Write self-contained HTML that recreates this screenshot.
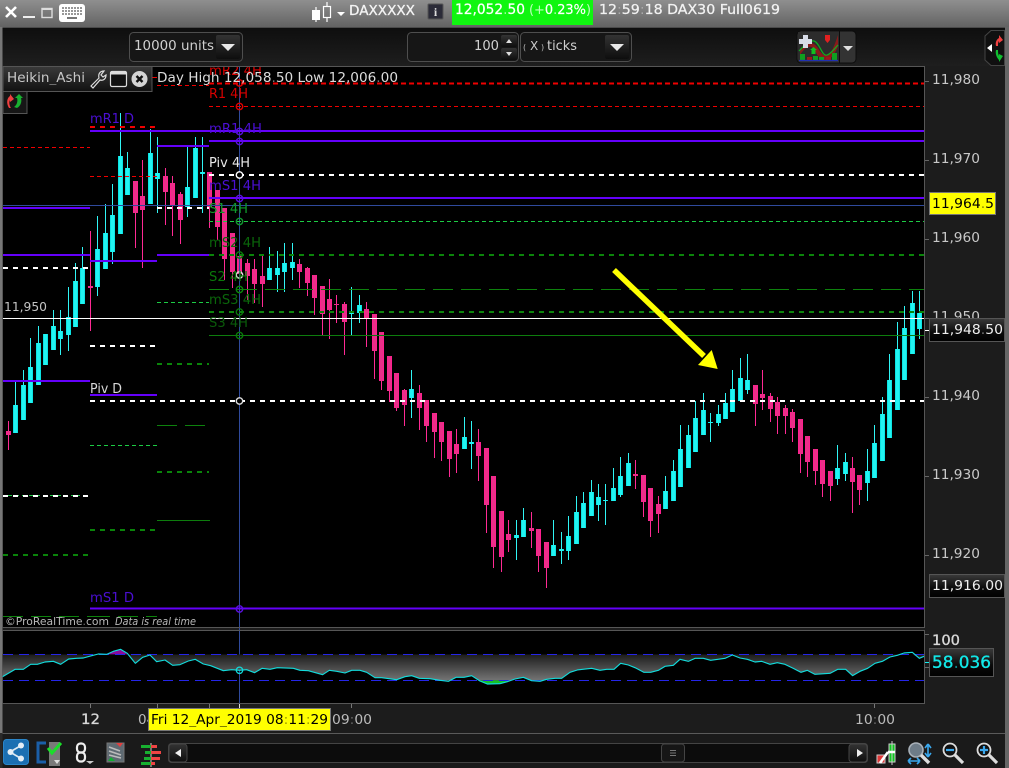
<!DOCTYPE html>
<html><head><meta charset="utf-8"><title>DAX chart</title>
<style>
html,body{margin:0;padding:0;background:#1c1c1c;width:1009px;height:768px;overflow:hidden}
svg{display:block;position:absolute;left:0;top:0}
text{font-family:"DejaVu Sans","Liberation Sans",sans-serif;white-space:pre}
</style></head><body>
<svg width="1009" height="768" viewBox="0 0 1009 768" xmlns="http://www.w3.org/2000/svg">
<defs>
<linearGradient id="top" x1="0" y1="0" x2="0" y2="1"><stop offset="0" stop-color="#8f8f8f"/><stop offset="1" stop-color="#636363"/></linearGradient>
<linearGradient id="tb" x1="0" y1="0" x2="0" y2="1"><stop offset="0" stop-color="#0e0e0e"/><stop offset="1" stop-color="#1e1e1e"/></linearGradient>
<linearGradient id="btn" x1="0" y1="0" x2="0" y2="1"><stop offset="0" stop-color="#333"/><stop offset="1" stop-color="#0e0e0e"/></linearGradient>
<linearGradient id="lab" x1="0" y1="0" x2="0" y2="1"><stop offset="0" stop-color="#3a3a3a"/><stop offset=".6" stop-color="#0a0a0a"/><stop offset="1" stop-color="#000"/></linearGradient>
<linearGradient id="osc" gradientUnits="userSpaceOnUse" x1="0" y1="163" x2="0" y2="241"><stop offset="0" stop-color="#1c1c1c"/><stop offset="1" stop-color="#747474"/></linearGradient>
<linearGradient id="hdr" x1="0" y1="0" x2="0" y2="1"><stop offset="0" stop-color="#3a3a3a"/><stop offset="1" stop-color="#111"/></linearGradient>
<clipPath id="cc"><rect x="3" y="66" width="921" height="561"/></clipPath>
<clipPath id="band"><rect x="0" y="163" width="1600" height="78"/></clipPath>
<clipPath id="ind"><rect x="798" y="32" width="41" height="29"/></clipPath>
<path id="cb" fill="none" d="M15.5 405V433M23.5 385V420M30.5 367V403M38.5 343V385M45.5 334V365M53.5 326V350M60.5 331V339M68.5 317V335M75.5 281V327M82.5 268V304M97.5 249V287M105.5 233V269M112.5 215V252M120.5 156V234M127.5 168V195M150.5 153V204M157.5 173V179M187.5 187V207M195.5 148V198M202.5 172V174M269.5 268V280M277.5 268V275M284.5 263V272M292.5 262V268M351.5 312V314M359.5 305V313M411.5 389V398M464.5 437V449M471.5 442V444M516.5 535V538M523.5 520V537M553.5 545V556M561.5 549V551M568.5 536V551M576.5 512V544M583.5 503V528M591.5 492V516M598.5 497V505M605.5 500V501M613.5 488V501M620.5 476V495M628.5 463V486M665.5 491V509M673.5 471V501M680.5 449V487M688.5 435V468M695.5 418V452M703.5 410V435M710.5 422V423M718.5 414V423M725.5 403V419M732.5 389V412M740.5 378V401M747.5 380V390M837.5 468V479M845.5 462V474M867.5 471V483M874.5 443V478M882.5 414V461M889.5 380V438M897.5 349V410M904.5 328V380M912.5 303V354M919.5 313V329"/>
<path id="pb" fill="none" d="M8.5 431V435M90.5 286V288M135.5 181V213M142.5 196V210M165.5 176V192M172.5 183V206M180.5 194V220M209.5 172V207M217.5 190V227M224.5 208V259M232.5 233V272M239.5 256V274M247.5 263V276M254.5 269V284M262.5 276V284M299.5 264V272M307.5 268V283M314.5 275V298M322.5 286V314M329.5 299V310M336.5 304V305M344.5 304V322M366.5 309V318M374.5 314V351M381.5 332V381M389.5 356V391M396.5 373V408M404.5 390V405M419.5 393V408M426.5 400V426M434.5 413V432M441.5 422V442M449.5 431V459M456.5 444V454M478.5 442V456M486.5 448V505M493.5 476V547M501.5 511V557M508.5 534V540M531.5 528V531M538.5 529V556M546.5 542V568M635.5 474V476M643.5 475V502M650.5 488V521M658.5 504V514M755.5 385V404M762.5 394V398M770.5 396V409M777.5 402V416M785.5 408V416M792.5 412V428M800.5 419V454M807.5 436V462M815.5 449V471M822.5 460V484M830.5 471V486M852.5 468V482M859.5 475V490"/>
</defs>

<!-- backgrounds -->
<rect width="1009" height="768" fill="#1c1c1c"/>
<rect x="0" y="0" width="1009" height="27" fill="url(#top)"/>
<rect x="0" y="27" width="1009" height="1" fill="#4a4a4a"/>
<rect x="2" y="28" width="1003" height="38" fill="url(#tb)"/>
<rect x="0" y="27" width="2.5" height="706" fill="#777"/>
<rect x="1005" y="27" width="4" height="741" fill="#666"/>
<rect x="2.5" y="66" width="922" height="561" fill="#000"/>
<rect x="2.5" y="630.5" width="922" height="73" fill="#000"/>
<rect x="2.5" y="733" width="1002.5" height="1" fill="#5a5a5a"/>
<rect x="2.5" y="734" width="1002.5" height="34" fill="#1a1a1a"/>
<rect x="0" y="733" width="2.5" height="35" fill="#2a2a2a"/>

<!-- candles -->
<g clip-path="url(#cc)">
<path fill="none" stroke="#30f5f5" stroke-width="1" d="M15.5 382V433M23.5 370V420M30.5 338V403M38.5 326V385M45.5 334V365M53.5 310V350M60.5 310V355M68.5 287V351M75.5 263V327M82.5 247V304M97.5 216V296M105.5 204V269M112.5 184V264M120.5 113V234M127.5 152V195M150.5 129V204M157.5 137V213M187.5 147V217M195.5 137V198M202.5 137V213M269.5 247V280M277.5 251V292M284.5 243V292M292.5 243V280M351.5 287V335M359.5 295V323M411.5 370V418M464.5 417V449M471.5 421V469M516.5 520V560M523.5 508V537M553.5 520V556M561.5 532V564M568.5 516V560M576.5 496V544M583.5 492V528M591.5 480V516M598.5 484V521M605.5 484V525M613.5 468V501M620.5 457V497M628.5 453V486M665.5 476V509M673.5 460V501M680.5 425V487M688.5 425V468M695.5 401V452M703.5 393V435M710.5 413V442M718.5 405V426M725.5 393V419M732.5 370V412M740.5 358V401M747.5 354V394M837.5 445V485M845.5 453V481M867.5 449V501M874.5 425V478M882.5 397V461M889.5 354V438M897.5 322V410M904.5 306V380M912.5 291V354M919.5 291V339"/>
<path fill="none" stroke="#ff2a94" stroke-width="1" d="M8.5 421V450M90.5 231V331M135.5 181V248M142.5 160V268M165.5 168V225M172.5 176V236M180.5 192V244M209.5 172V228M217.5 190V240M224.5 208V280M232.5 233V288M239.5 256V300M247.5 259V300M254.5 259V303M262.5 256V307M299.5 259V288M307.5 267V296M314.5 275V315M322.5 286V335M329.5 279V339M336.5 295V323M344.5 302V355M366.5 302V347M374.5 314V379M381.5 332V390M389.5 356V402M396.5 373V411M404.5 389V426M419.5 385V430M426.5 400V442M434.5 413V458M441.5 422V461M449.5 431V477M456.5 429V473M478.5 429V481M486.5 448V533M493.5 476V568M501.5 511V572M508.5 520V552M531.5 512V548M538.5 529V572M546.5 542V588M635.5 460V489M643.5 475V517M650.5 488V537M658.5 496V533M755.5 385V426M762.5 370V410M770.5 393V422M777.5 397V434M785.5 405V434M792.5 409V442M800.5 419V473M807.5 436V477M815.5 449V485M822.5 460V497M830.5 471V501M852.5 457V513M859.5 475V505"/>
<use href="#cb" stroke="#0ce4e4" stroke-width="5"/>
<use href="#cb" stroke="#22f4f2" stroke-width="3"/>
<use href="#pb" stroke="#ff1f90" stroke-width="5"/>
<use href="#pb" stroke="#ea2f88" stroke-width="3"/>
</g>

<!-- crosshair -->
<path d="M3 205.5H924M239.5 66V703" stroke="#2f4a9c" stroke-width="1" fill="none"/>

<!-- level lines -->
<g fill="none" clip-path="url(#cc)">
<!-- red -->
<g stroke="#f00000">
<path d="M209 83.5H924" stroke-width="2" stroke-dasharray="5 3"/>
<path d="M209 106.5H924" stroke-dasharray="4 3"/>
<path d="M157 85.5H209" stroke-dasharray="4 3"/>
<path d="M152 77.5H157"/>
<path d="M3 147.5H90" stroke-dasharray="4 3"/>
<path d="M90 127H156" stroke-width="2" stroke-dasharray="5 5"/>
<path d="M90 176.5H157" stroke-dasharray="4 3"/>
</g>
<!-- purple -->
<g stroke="#6400fa" stroke-width="2">
<path d="M90 131H924M209 141H924M157 146H209M209 198H924M3 208H90M3 255H90M157 255H209M90 261H157M3 381H90M90 395H157M90 608.5H924"/>
</g>
<path d="M3 318.5H924" stroke="#fff"/>
<!-- green -->
<g stroke="#1ccc44" stroke-dasharray="4 3">
<path d="M209 221.5H924M157 302.5H209M90 445.5H157M8 495.5H80"/>
</g>
<g stroke="#0a840a" stroke-width="2" stroke-dasharray="5 5">
<path d="M209 255H924M209 312H924M157 364H209M157 472H209M90 530H157M3 555H90"/>
</g>
<g stroke="#0d820d" stroke-dasharray="20 8">
<path d="M209 289.5H924M157 425.5H209M3 616.5H90M90 616.5H157"/>
</g>
<path d="M209 335.5H924M157 520.5H210" stroke="#0d7d0d"/>
<!-- white -->
<g stroke="#fff" stroke-width="2" stroke-dasharray="5 5">
<path d="M209 175H924M157 208H209M3 268H90M90 346H157M90 401H924M3 496H90"/>
</g>
</g>

<!-- crosshair circles -->
<g fill="none" stroke-width="1.4">
<circle cx="239.5" cy="83" r="3.2" stroke="#e00000"/>
<circle cx="239.5" cy="106.5" r="3.2" stroke="#e00000"/>
<circle cx="239.5" cy="131.5" r="3.2" stroke="#5a10e0"/>
<circle cx="239.5" cy="141.5" r="3.2" stroke="#5a10e0"/>
<circle cx="239.5" cy="175" r="3.2" stroke="#fff" fill="#000"/>
<circle cx="239.5" cy="198.5" r="3.2" stroke="#5a10e0"/>
<circle cx="239.5" cy="221.5" r="3.2" stroke="#109a30"/>
<circle cx="239.5" cy="255" r="3.2" stroke="#0a7a0a"/>
<circle cx="239.5" cy="275" r="3.2" stroke="#ddd"/>
<circle cx="239.5" cy="289.5" r="3.2" stroke="#0a8a0a"/>
<circle cx="239.5" cy="312" r="3.2" stroke="#0a7a0a"/>
<circle cx="239.5" cy="335.5" r="3.2" stroke="#0a7a0a"/>
<circle cx="239.5" cy="401" r="3.2" stroke="#ddd" fill="#000"/>
<circle cx="239.5" cy="609" r="3.2" stroke="#5a10e0"/>
</g>

<!-- level labels -->
<g font-size="13">
<g clip-path="url(#cc)"><text x="209" y="75" fill="#d80000" textLength="53" lengthAdjust="spacingAndGlyphs">mR2 4H</text></g>
<text x="209" y="98" fill="#d80000" textLength="39" lengthAdjust="spacingAndGlyphs">R1 4H</text>
<text x="209" y="133" fill="#4b0fd4" textLength="53" lengthAdjust="spacingAndGlyphs">mR1 4H</text>
<text x="209" y="167" fill="#e8e8e8" textLength="41" lengthAdjust="spacingAndGlyphs">Piv 4H</text>
<text x="209" y="190" fill="#4b0fd4" textLength="52" lengthAdjust="spacingAndGlyphs">mS1 4H</text>
<text x="209" y="213" fill="#0f9a2a" textLength="39" lengthAdjust="spacingAndGlyphs">S1 4H</text>
<text x="209" y="247" fill="#0a660a" textLength="52" lengthAdjust="spacingAndGlyphs">mS2 4H</text>
<text x="209" y="281" fill="#0a780a" textLength="39" lengthAdjust="spacingAndGlyphs">S2 4H</text>
<text x="209" y="304" fill="#0a660a" textLength="52" lengthAdjust="spacingAndGlyphs">mS3 4H</text>
<text x="209" y="327" fill="#0a5a0a" textLength="39" lengthAdjust="spacingAndGlyphs">S3 4H</text>
<text x="90" y="123" fill="#4b0fd4" textLength="44" lengthAdjust="spacingAndGlyphs">mR1 D</text>
<text x="90" y="393" fill="#d8d8d8" textLength="32" lengthAdjust="spacingAndGlyphs">Piv D</text>
<text x="90" y="602" fill="#4b0fd4" textLength="44" lengthAdjust="spacingAndGlyphs">mS1 D</text>
<text x="4" y="311" fill="#c4c4c4" font-size="12.5" textLength="43" lengthAdjust="spacingAndGlyphs">11,950</text>
<text x="157" y="82" fill="#dcdcdc" textLength="241" lengthAdjust="spacingAndGlyphs">Day High 12,058<tspan fill="#777">.</tspan>50 Low 12,006<tspan fill="#777">.</tspan>00</text>
</g>

<!-- yellow arrow -->
<path d="M614 270L704 356" stroke="#ffff00" stroke-width="5.5" fill="none"/>
<path d="M698 365L711.7 350L717.7 369Z" fill="#ffff00"/>

<!-- chart frame -->
<rect x="2.5" y="66.5" width="922" height="561" fill="none" stroke="#565656"/>
<rect x="2.5" y="630.5" width="922" height="73" fill="none" stroke="#565656"/>

<!-- footer text -->
<text x="5" y="625" fill="#b8b8b8" font-size="11" textLength="104" lengthAdjust="spacingAndGlyphs">©ProRealTime<tspan fill="#777">.</tspan>com</text>
<text x="115" y="625" fill="#b8b8b8" font-size="11" font-style="italic" textLength="81" lengthAdjust="spacingAndGlyphs">Data is real time</text>

<!-- oscillator -->
<g transform="translate(0 600) scale(.33333)">
<g clip-path="url(#band)"><polygon fill="url(#osc)" points="8,163 8,230 45,208 70,208 92,193 112,193 135,186 160,184 182,193 206,177 230,175 250,174 275,167 295,162 320,163 340,154 362,148 382,160 406,190 428,172 450,165 470,185 495,180 518,196 540,194 565,183 586,178 610,192 632,197 670,212 695,209 718,211 740,209 764,218 786,205 810,208 832,203 880,205 900,211 925,212 968,224 988,211 1010,214 1035,219 1055,211 1080,211 1100,217 1125,233 1145,233 1190,239 1215,230 1235,227 1258,235 1290,236 1320,241 1345,244 1368,232 1392,232 1415,227 1440,243 1462,252 1500,251 1500,163"/></g>
<polygon fill="#8a0a9a" points="320,163 340,154 362,148 382,163"/>
<polygon fill="#15c02a" points="1436,241 1462,252 1500,251 1522,245 1530,241"/>
</g>
<g transform="translate(500 600) scale(.33333)">
<g clip-path="url(#band)"><polygon fill="url(#osc)" points="0,163 0,251 22,245 45,237 70,232 95,242 120,244 140,238 165,235 185,235 210,217 232,210 275,205 300,211 320,208 342,208 362,190 385,195 405,203 432,217 452,217 475,211 495,199 520,196 540,178 565,184 585,175 610,175 632,181 675,175 697,165 720,174 742,178 765,186 785,184 810,193 832,188 855,193 880,205 903,217 922,211 945,223 990,220 1013,208 1037,208 1058,227 1080,214 1103,205 1125,190 1147,184 1170,171 1192,166 1212,163 1237,163 1258,175 1272,169 1272,163"/></g>
</g>
<path d="M3 654.5H924M3 680.5H924" stroke="#2525e8" fill="none" stroke-dasharray="10 6"/>
<g transform="translate(0 600) scale(.33333)" fill="none" stroke="#12dcdc" stroke-width="3.4" stroke-linejoin="round">
<polyline points="8,230 45,208 70,208 92,193 112,193 135,186 160,184 182,193 206,177 230,175 250,174 275,167 295,162 320,163 340,154 362,148 382,160 406,190 428,172 450,165 470,185 495,180 518,196 540,194 565,183 586,178 610,192 632,197 670,212 695,209 718,211 740,209 764,218 786,205 810,208 832,203 880,205 900,211 925,212 968,224 988,211 1010,214 1035,219 1055,211 1080,211 1100,217 1125,233 1145,233 1190,239 1215,230 1235,227 1258,235 1290,236 1320,241 1345,244 1368,232 1392,232 1415,227 1440,243 1462,252 1500,251"/>
</g>
<g transform="translate(500 600) scale(.33333)" fill="none" stroke="#12dcdc" stroke-width="3.4" stroke-linejoin="round">
<polyline points="0,251 22,245 45,237 70,232 95,242 120,244 140,238 165,235 185,235 210,217 232,210 275,205 300,211 320,208 342,208 362,190 385,195 405,203 432,217 452,217 475,211 495,199 520,196 540,178 565,184 585,175 610,175 632,181 675,175 697,165 720,174 742,178 765,186 785,184 810,193 832,188 855,193 880,205 903,217 922,211 945,223 990,220 1013,208 1037,208 1058,227 1080,214 1103,205 1125,190 1147,184 1170,171 1192,166 1212,159 1237,157 1258,175 1272,169"/>
</g>
<circle cx="239.5" cy="670.3" r="3.2" fill="none" stroke="#12dcdc" stroke-width="1.3"/>

<!-- price axis -->
<path d="M925 81.5H929M925 160.5H929M925 239.5H929M925 318.5H929M925 397.5H929M925 476.5H929M925 555.5H929M925 634.5H929M925 667.5H929" stroke="#666" fill="none"/>
<path d="M925 330.5H929" stroke="#fff"/>
<path d="M925 662.5H929" stroke="#1ee"/>
<g font-size="13.5" fill="#c8c8c8">
<text x="932" y="84" textLength="48" lengthAdjust="spacingAndGlyphs">11,980</text>
<text x="932" y="163" textLength="48" lengthAdjust="spacingAndGlyphs">11,970</text>
<text x="932" y="242" textLength="48" lengthAdjust="spacingAndGlyphs">11,960</text>
<text x="932" y="321" textLength="48" lengthAdjust="spacingAndGlyphs">11,950</text>
<text x="932" y="400" textLength="48" lengthAdjust="spacingAndGlyphs">11,940</text>
<text x="932" y="479" textLength="48" lengthAdjust="spacingAndGlyphs">11,930</text>
<text x="932" y="558" textLength="48" lengthAdjust="spacingAndGlyphs">11,920</text>
<text x="932" y="645" textLength="28" lengthAdjust="spacingAndGlyphs" font-size="14.5" fill="#d8d8d8" stroke="#d8d8d8" stroke-width=".35">100</text>
</g>
<rect x="929.5" y="192.5" width="66" height="22" fill="#ffff00" stroke="#777"/>
<text x="932" y="208" font-size="13.5" fill="#000" textLength="62" lengthAdjust="spacingAndGlyphs">11,964<tspan fill="#888800">.</tspan>5</text>
<rect x="929.5" y="318.5" width="75" height="23" fill="url(#lab)" stroke="#555"/>
<text x="932" y="334" font-size="13.5" fill="#eee" textLength="71" lengthAdjust="spacingAndGlyphs">11,948<tspan fill="#777">.</tspan>50</text>
<rect x="929.5" y="574.5" width="75" height="23" fill="url(#lab)" stroke="#555"/>
<text x="932" y="590" font-size="13.5" fill="#eee" textLength="71" lengthAdjust="spacingAndGlyphs">11,916<tspan fill="#777">.</tspan>00</text>
<rect x="929.5" y="648.5" width="64" height="28" fill="url(#lab)" stroke="#555"/>
<text x="932" y="668" font-size="16.5" fill="#12e8e8" stroke="#12e8e8" stroke-width=".35" textLength="59" lengthAdjust="spacingAndGlyphs">58<tspan fill="#0a8888" stroke="none">.</tspan>036</text>

<!-- time axis -->
<path d="M90.5 704V708M157.5 704V708M209.5 704V708M351.5 704V708M874.5 704V708" stroke="#777" fill="none"/>
<path d="M239.5 704V708" stroke="#ddd" fill="none"/>
<text x="81" y="724" font-size="14" fill="#d8d8d8" stroke="#d8d8d8" stroke-width=".3" textLength="19" lengthAdjust="spacingAndGlyphs">12</text>
<text x="138" y="724" font-size="13.5" fill="#bbb">04</text>
<text x="332" y="724" font-size="13.5" fill="#bbb" textLength="40" lengthAdjust="spacingAndGlyphs">09<tspan fill="#666">:</tspan>00</text>
<text x="855" y="724" font-size="13.5" fill="#bbb" textLength="40" lengthAdjust="spacingAndGlyphs">10<tspan fill="#666">:</tspan>00</text>
<rect x="148.5" y="708.5" width="182" height="22" fill="#ffff00" stroke="#777"/>
<text x="151" y="724" font-size="13.5" fill="#000" textLength="177" lengthAdjust="spacingAndGlyphs">Fri 12<tspan fill="#777700">_</tspan>Apr<tspan fill="#777700">_</tspan>2019 08<tspan fill="#999900">:</tspan>11<tspan fill="#999900">:</tspan>29</text>

<!-- top bar -->
<path d="M6 7L16 17M16 7L6 17" stroke="#fff" stroke-width="2.6" fill="none"/>
<rect x="23" y="16" width="12" height="2" fill="#eee"/>
<rect x="42" y="8.5" width="10" height="9" fill="none" stroke="#ddd" stroke-width="1.4"/>
<rect x="42" y="8" width="10" height="2" fill="#ddd"/>
<rect x="59" y="4" width="26" height="18" rx="3" fill="#fff"/>
<path d="M62 8h20M62 11h20M62 14h20" stroke="#777" stroke-width="1.4" stroke-dasharray="2 1" fill="none"/>
<rect x="67" y="17" width="10" height="2" fill="#777"/>
<rect x="312.5" y="10.5" width="7" height="9" fill="#fff" stroke="#fff"/>
<path d="M316 7V22" stroke="#fff" stroke-width="1.2"/>
<rect x="323.5" y="6.5" width="7" height="11" fill="none" stroke="#fff" stroke-width="1.2"/>
<path d="M327 2V6M327 18V22" stroke="#fff" stroke-width="1.2"/>
<path d="M337 12H345L341 16Z" fill="#fff"/>
<text x="349" y="15" font-size="13" fill="#f4f4f4" stroke="#f4f4f4" stroke-width=".25" textLength="66" lengthAdjust="spacingAndGlyphs">DAXXXXX</text>
<rect x="428" y="4" width="15" height="15" rx="1" fill="#2b2b38" stroke="#555"/>
<text x="435.5" y="16" font-size="12" font-weight="bold" fill="#ddd" text-anchor="middle" style="font-family:'Liberation Serif',serif">i</text>
<rect x="452" y="0" width="141" height="25" fill="#10f510"/>
<text x="455" y="14" font-size="14" fill="#fff" stroke="#fff" stroke-width=".25" textLength="70" lengthAdjust="spacingAndGlyphs">12,052<tspan fill="#9f9" stroke="none">.</tspan>50</text>
<text x="529" y="14" font-size="13.5" fill="#fff" stroke="#fff" stroke-width=".2" textLength="62" lengthAdjust="spacingAndGlyphs"><tspan fill="#bfb" stroke="none">(+</tspan>0<tspan fill="#bfb" stroke="none">.</tspan>23%<tspan fill="#bfb" stroke="none">)</tspan></text>
<text x="599" y="14" font-size="13" fill="#f2f2f2" stroke="#f2f2f2" stroke-width=".25" textLength="181" lengthAdjust="spacingAndGlyphs">12<tspan fill="#aaa" stroke="none">:</tspan>59<tspan fill="#aaa" stroke="none">:</tspan>18 DAX30 Full0619</text>

<!-- toolbar: units -->
<rect x="129.5" y="32.5" width="113" height="29" rx="4" fill="#161616" stroke="#4e4e4e"/>
<text x="134" y="50" font-size="13" fill="#d0d0d0" textLength="80" lengthAdjust="spacingAndGlyphs">10000 units</text>
<rect x="216" y="35" width="24" height="24" rx="2" fill="url(#btn)"/>
<path d="M221 44H235L228 51Z" fill="#e8e8e8"/>
<!-- ticks -->
<rect x="407.5" y="32.5" width="111" height="29" rx="4" fill="#161616" stroke="#4e4e4e"/>
<text x="474" y="50" font-size="13" fill="#d0d0d0" textLength="25" lengthAdjust="spacingAndGlyphs">100</text>
<rect x="501" y="35" width="16" height="12" rx="2" fill="url(#btn)"/>
<rect x="501" y="48" width="16" height="12" rx="2" fill="url(#btn)"/>
<path d="M506 43H512L509 39Z M506 52H512L509 56Z" fill="#ddd"/>
<rect x="520.5" y="32.5" width="111" height="29" rx="4" fill="#161616" stroke="#4e4e4e"/>
<text x="523" y="50" font-size="8" fill="#bbb">(</text>
<text x="530" y="50" font-size="12" fill="#ccc">X</text>
<text x="541" y="50" font-size="8" fill="#bbb">)</text>
<text x="547" y="50" font-size="13" fill="#d0d0d0" textLength="30" lengthAdjust="spacingAndGlyphs">ticks</text>
<rect x="605" y="35" width="24" height="24" rx="2" fill="url(#btn)"/>
<path d="M610 44H624L617 51Z" fill="#e8e8e8"/>
<!-- indicator button -->
<rect x="797" y="31" width="59" height="32" rx="4" fill="#333" stroke="#0c0c0c"/>
<rect x="798" y="32" width="41" height="29" fill="#2c2c2c"/>
<rect x="839" y="31" width="1" height="32" fill="#0c0c0c"/>
<g clip-path="url(#ind)">
<path d="M800 50C806 42 812 40 818 48C822 56 827 58 831 52C834 47 836 41 838 35V46C835 54 830 62 823 60C817 58 815 48 811 47C807 46 803 50 800 55Z" fill="#8a1a1a"/>
<path d="M799 51C804 46 809 40 814 41C820 43 822 57 827 55C831 54 834 49 838 45" fill="none" stroke="#0db020" stroke-width="1.2"/>
<path d="M810 50L813.5 47L817 50H815.5V54H811.5V50Z" fill="#10c020"/>
<path d="M825 35H830V40L827.5 43L825 40Z" fill="#e02020"/>
<path d="M800 54h5v6h-5zM813 56h5v4h-5zM819 57h5v3h-5zM832 53h5v7h-5z" fill="#10a020"/>
<path d="M807 57h5v3h-5zM826 57h5v3h-5z" fill="#a01818"/>
</g>
<path d="M803 35H808V39H812V44H808V48H803V44H799V39H803Z" fill="#d8dce8"/>
<path d="M799 60.5H838" stroke="#2030b0" stroke-width="1.2"/>
<path d="M843 46H853L848 51Z" fill="#e0e0e0"/>
<!-- right handle -->
<path d="M1004.5 30.5H991L985 36V60L991 65.5H1004.5Z" fill="#101010" stroke="#444"/>
<path d="M992 44L987 48L992 52Z" fill="#fff"/>
<path d="M996 46C995 42 997 39 999 38V35L1003 40L999 43V41C998 42 998 44 998 46Z" fill="#f04040"/>
<path d="M996 50C995 54 997 58 999 60V62L1003 56L999 54V56C998 54 998 52 998 50Z" fill="#10c030"/>

<!-- panel header -->
<rect x="3" y="66.5" width="149" height="25" fill="url(#hdr)" stroke="#555"/>
<text x="7" y="82" font-size="13" fill="#c8c8c8" textLength="78" lengthAdjust="spacingAndGlyphs">Heikin<tspan fill="#777">_</tspan>Ashi</text>
<path d="M91 86L99 78C98 74 100 71 104 71L101 75L103 77L106 75C106 79 103 81 100 80L93 88Z" fill="none" stroke="#ddd" stroke-width="1.2"/>
<rect x="110.5" y="71.5" width="16" height="15" rx="1.5" fill="#111" stroke="#ddd" stroke-width="1.2"/>
<rect x="110.5" y="71.5" width="16" height="3" fill="#ddd"/>
<circle cx="139.5" cy="79" r="8" fill="#d4d4d4"/>
<path d="M136.5 76L142.5 82M142.5 76L136.5 82" stroke="#111" stroke-width="2.4"/>
<rect x="3" y="91.5" width="24" height="22" fill="#161616" stroke="#555"/>
<path d="M9 108C6 103 7 98 10 96V94L14 99L10 102V100C9 102 9 105 11 108Z" fill="#f04040"/>
<path d="M17 108C21 106 22 101 21 98H23L19 94L15 98H17C18 101 17 105 14 107Z" fill="#18b030"/>

<!-- bottom toolbar -->
<rect x="3.5" y="739.5" width="25" height="25" rx="3" fill="#1b6fb2" stroke="#2a85c8"/>
<path d="M10 752L21 745.5M10 752L21 758.5" stroke="#dce8f2" stroke-width="1.6"/>
<circle cx="10.5" cy="752" r="3" fill="#e4eef6"/><circle cx="21" cy="745.5" r="3" fill="#e4eef6"/><circle cx="21" cy="758.5" r="3" fill="#e4eef6"/>
<path d="M46 743H38V762H46" fill="none" stroke="#1b5fa8" stroke-width="3"/>
<rect x="49" y="742" width="11" height="24" fill="#7a7a7a"/>
<path d="M54 760H60L57 764Z" fill="#ddd"/>
<path d="M48 748L52 753L61 743" fill="none" stroke="#1adf2a" stroke-width="3"/>
<rect x="77" y="743.5" width="8" height="9" rx="3.5" fill="none" stroke="#eee" stroke-width="2.2"/>
<rect x="77" y="752.5" width="8" height="9" rx="3.5" fill="none" stroke="#eee" stroke-width="2.2"/>
<path d="M86 761H94L90 764Z" fill="#ccc"/>
<rect x="107" y="743" width="17" height="19" fill="#5e6a72" stroke="#777"/>
<path d="M109 747L120 751M109 751L121 755M109 755L121 758" stroke="#bbb" stroke-width="1.6"/>
<path d="M116 743H123L120 747Z" fill="#e04040"/><path d="M108 761H115L111 757Z" fill="#10b030"/>
<path d="M151 743V767" stroke="#ccc"/>
<path d="M141 745h10v3h-10zM145 751h6v3h-6zM144 757h7v3h-7zM141 762h10v3h-10z" fill="#18b030"/>
<path d="M151 745h6v3h-6zM151 751h10v3h-10zM151 757h9v3h-9zM151 762h4v3h-4z" fill="#ee4444"/>
<!-- scrollbar -->
<rect x="168.5" y="743.5" width="699" height="19" rx="3" fill="#0c0c0c" stroke="#444"/>
<rect x="169" y="744" width="18" height="18" rx="3" fill="url(#btn)" stroke="#444"/>
<path d="M181 749V757L175 753Z" fill="#eee"/>
<rect x="661.5" y="744" width="23" height="18" rx="3" fill="#161616" stroke="#444"/>
<path d="M670 750.5H676M670 753H676M670 755.5H676" stroke="#777" fill="none"/>
<rect x="849" y="744" width="18" height="18" rx="3" fill="url(#btn)" stroke="#444"/>
<path d="M857 749V757L863 753Z" fill="#eee"/>
<!-- right icons -->
<rect x="889" y="744" width="6" height="18" fill="#10c820" stroke="#ccc"/>
<path d="M892 741V765" stroke="#ccc"/>
<rect x="877" y="755" width="8" height="8" fill="#e03838" stroke="#ccc"/>
<path d="M880 763L888 752M888 752H895" stroke="#fff" stroke-width="2.6" fill="none"/>
<circle cx="916" cy="750" r="7" fill="#6e7c88" stroke="#a8b0b8" stroke-width="1.6"/>
<path d="M921 755L929 763" stroke="#ddd" stroke-width="3.4"/>
<path d="M928 745V756M928 744L925 748M928 744L931 748M928 757L925 753M928 757L931 753" stroke="#3aa8ee" stroke-width="1.6" fill="none"/>
<path d="M909 761H919M908 761L911 758M908 761L911 764M920 761L917 758M920 761L917 764" stroke="#3aa8ee" stroke-width="1.6" fill="none"/>
<circle cx="950" cy="750" r="6.5" fill="#111" stroke="#ddd" stroke-width="1.8"/>
<path d="M946 750H954" stroke="#3aa8ee" stroke-width="2.2"/>
<path d="M955 755L963 763" stroke="#ddd" stroke-width="3.2"/>
<circle cx="984" cy="750" r="6.5" fill="#111" stroke="#ddd" stroke-width="1.8"/>
<path d="M980 750H988M984 746V754" stroke="#3aa8ee" stroke-width="2.2"/>
<path d="M989 755L997 763" stroke="#ddd" stroke-width="3.2"/>
</svg>
</body></html>
